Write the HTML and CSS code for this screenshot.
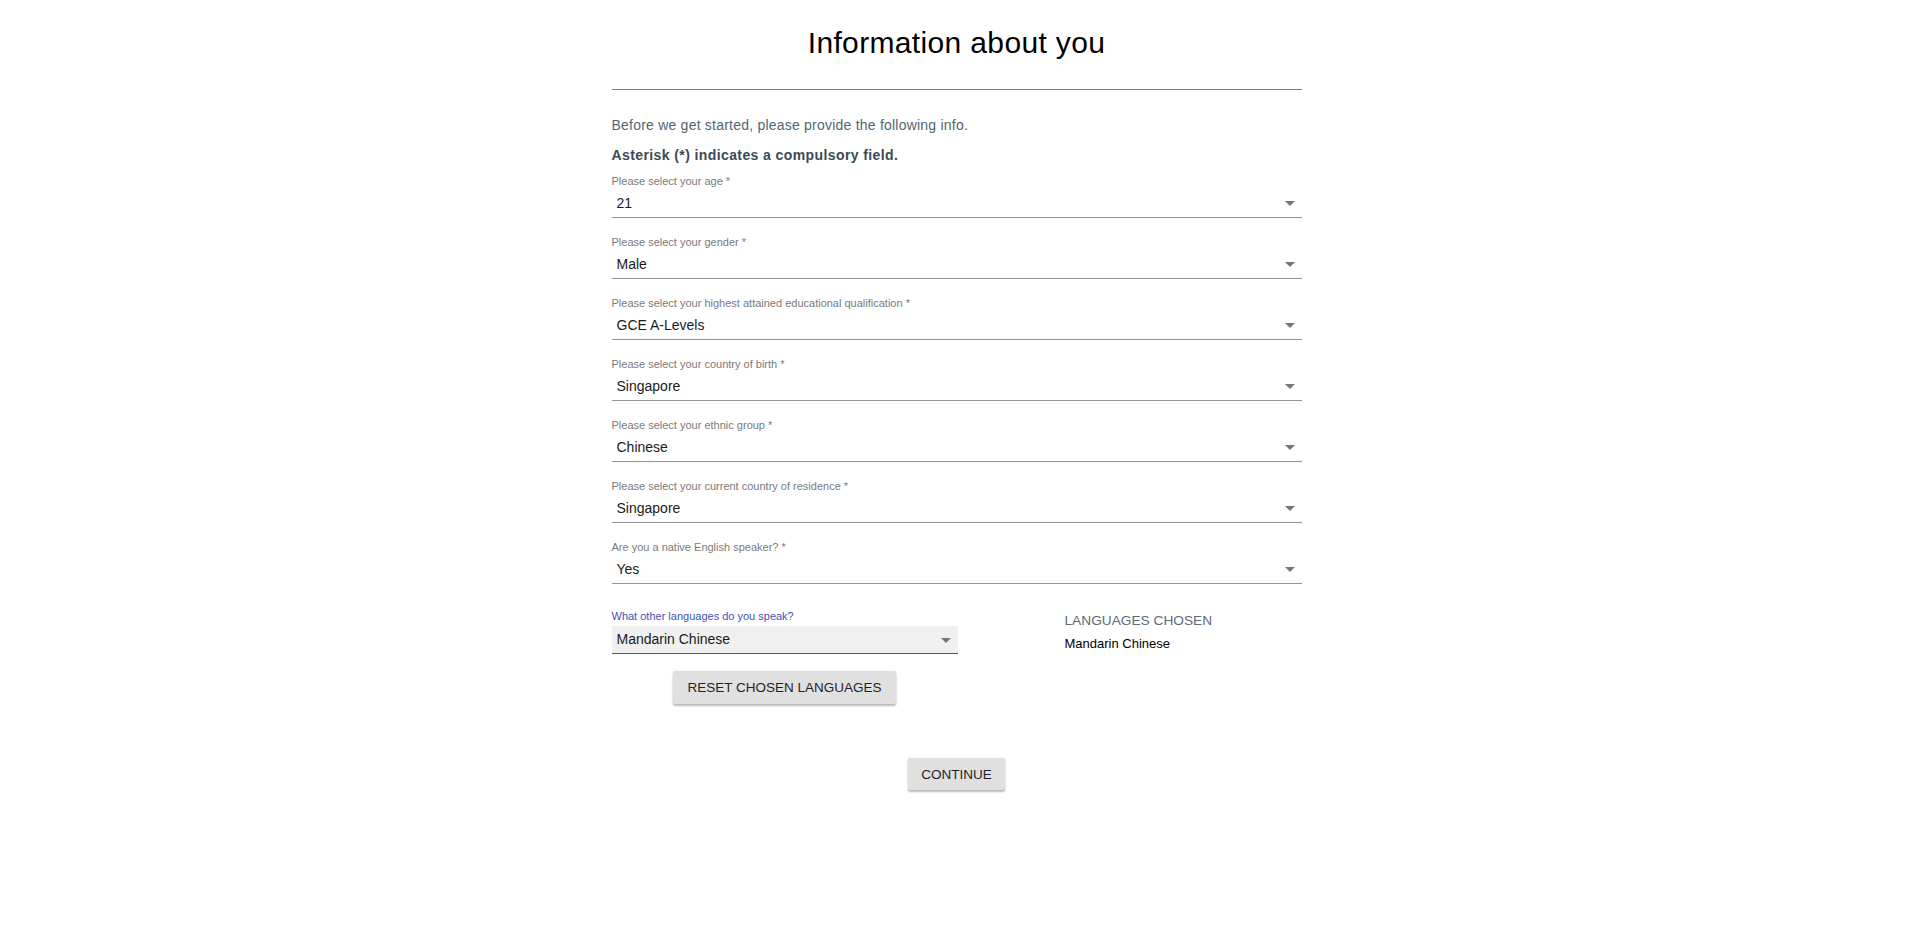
FILE: index.html
```html
<!DOCTYPE html>
<html lang="en">
<head>
<meta charset="utf-8">
<title>Information about you</title>
<link rel="stylesheet" href="styles.css">
</head>
<body>
<main class="page">
  <h1 class="title">Information about you</h1>
  <hr class="divider">
  <p class="intro">Before we get started, please provide the following info.</p>
  <p class="note">Asterisk (*) indicates a compulsory field.</p>

  <div class="field">
    <label class="field-label">Please select your age *</label>
    <div class="select"><span class="select-value">21</span><span class="arrow"></span></div>
  </div>
  <div class="field">
    <label class="field-label">Please select your gender *</label>
    <div class="select"><span class="select-value">Male</span><span class="arrow"></span></div>
  </div>
  <div class="field">
    <label class="field-label">Please select your highest attained educational qualification *</label>
    <div class="select"><span class="select-value">GCE A-Levels</span><span class="arrow"></span></div>
  </div>
  <div class="field">
    <label class="field-label">Please select your country of birth *</label>
    <div class="select"><span class="select-value">Singapore</span><span class="arrow"></span></div>
  </div>
  <div class="field">
    <label class="field-label">Please select your ethnic group *</label>
    <div class="select"><span class="select-value">Chinese</span><span class="arrow"></span></div>
  </div>
  <div class="field">
    <label class="field-label">Please select your current country of residence *</label>
    <div class="select"><span class="select-value">Singapore</span><span class="arrow"></span></div>
  </div>
  <div class="field">
    <label class="field-label">Are you a native English speaker? *</label>
    <div class="select"><span class="select-value">Yes</span><span class="arrow"></span></div>
  </div>

  <div class="languages">
    <div class="lang-left">
      <label class="field-label focused">What other languages do you speak?</label>
      <div class="select select-focused"><span class="select-value">Mandarin Chinese</span><span class="arrow"></span></div>
      <div class="reset-wrap">
        <button class="btn" type="button">Reset chosen languages</button>
      </div>
    </div>
    <div class="lang-right">
      <div class="chosen-title">Languages chosen</div>
      <div class="chosen-item">Mandarin Chinese</div>
    </div>
  </div>

  <div class="continue-wrap">
    <button class="btn btn-continue" type="button">Continue</button>
  </div>
</main>
</body>
</html>
```

FILE: styles.css
```css
* { box-sizing: border-box; }

html, body {
  margin: 0;
  padding: 0;
  background: #ffffff;
  font-family: "Liberation Sans", Arial, sans-serif;
  color: #212121;
}

.page {
  width: 690px;
  margin-left: calc(50% - 347px);
  padding-bottom: 40px;
}

.title {
  margin: 0;
  padding-top: 26px;
  font-size: 30px;
  line-height: 34px;
  font-weight: normal;
  letter-spacing: 0.35px;
  text-align: center;
  color: #000;
}

.divider {
  margin: 29px 0 0 0;
  border: 0;
  height: 1px;
  background: #6c7e8a;
}

.intro {
  margin: 25px 0 0 0;
  font-size: 14px;
  line-height: 20px;
  letter-spacing: 0.22px;
  color: #536571;
}

.note {
  margin: 10px 0 0 0;
  font-size: 14px;
  line-height: 20px;
  font-weight: bold;
  letter-spacing: 0.4px;
  color: #3b4a55;
}

.field {
  margin-top: 10px;
  margin-bottom: 8px;
}

.field + .field { margin-top: 18px; }

.field-label {
  display: block;
  font-size: 11px;
  line-height: 13px;
  color: #7a7a7a;
}

.field-label.focused { color: #3f51b5; }

.select {
  display: flex;
  align-items: center;
  justify-content: space-between;
  height: 30px;
  padding: 1px 7px 0 5px;
  border-bottom: 1px solid #949494;
  font-size: 14px;
  color: #1a1a1a;
}

.select-value { line-height: 28px; }

.arrow {
  width: 0;
  height: 0;
  border-left: 5px solid transparent;
  border-right: 5px solid transparent;
  border-top: 5px solid #767676;
  margin-top: 1px;
}

.languages {
  display: grid;
  grid-template-columns: 346px 1fr;
  column-gap: 107px;
  margin-top: 18px;
}

.lang-left .field-label { margin-top: 8px; }

.select-focused {
  margin-top: 3px;
  height: 28px;
  background: #f0f0f0;
  border-bottom: 1px solid #3f51b5;
  padding: 0 7px 0 5px;
}

.select-focused .select-value { line-height: 27px; }

.reset-wrap {
  display: flex;
  justify-content: center;
  margin-top: 17px;
}

.btn {
  font-family: "Liberation Sans", Arial, sans-serif;
  font-size: 13.5px;
  text-transform: uppercase;
  color: #1f1f2a;
  background: #e0e0e0;
  border: 0;
  border-radius: 2px;
  height: 33px;
  padding: 0 14px;
  box-shadow: 0 2px 2px rgba(0, 0, 0, 0.26), 0 0 2px rgba(0, 0, 0, 0.1);
}

.lang-right { padding-top: 11px; }

.chosen-title {
  font-size: 13.7px;
  line-height: 16px;
  text-transform: uppercase;
  color: #5b6a76;
}

.chosen-item {
  margin-top: 7px;
  font-size: 13px;
  line-height: 16px;
  color: #000;
}

.continue-wrap {
  display: flex;
  justify-content: center;
  margin-top: 54px;
}

.btn-continue {
  height: 32px;
  padding: 0 13px;
}
```
